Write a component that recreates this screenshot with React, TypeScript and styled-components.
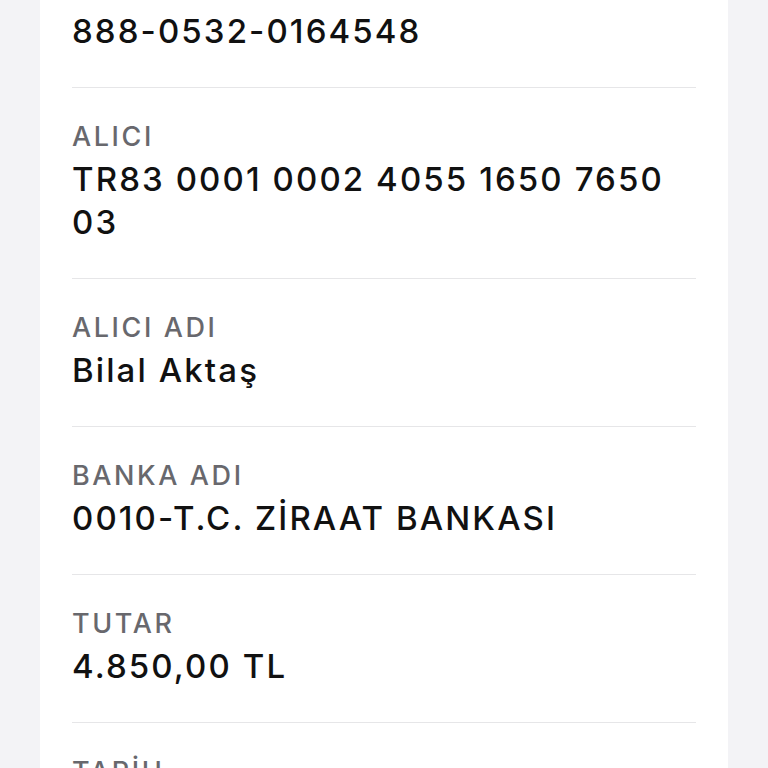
import React from "react";
import styled, { createGlobalStyle } from "styled-components";

const GlobalStyle = createGlobalStyle`
  html, body {
    margin: 0;
    padding: 0;
    background: #f3f3f6;
    overflow: hidden;
  }
  body {
    font-family: Inter, "Noto Sans", "DejaVu Sans", sans-serif;
    -webkit-font-smoothing: antialiased;
  }
`;

const Page = styled.div`
  padding: 0 40px;
  height: 768px;
  overflow: hidden;
`;

const Card = styled.div`
  background: #ffffff;
  padding: 0 32px;
  margin-top: -60px;
`;

const Row = styled.div`
  display: flex;
  flex-direction: column;
  gap: 5px;
  padding: 33px 0 34px;
  & + & {
    border-top: 1px solid #e6e6e8;
  }
`;

const Label = styled.div`
  font-size: 27px;
  line-height: 32px;
  font-weight: 500;
  color: #68686d;
  letter-spacing: 2.6px;
`;

const Value = styled.div`
  font-size: 33px;
  line-height: 43px;
  font-weight: 500;
  color: #111111;
  letter-spacing: 2.1px;
`;

const rows: { label: string; value: string }[] = [
  { label: "CEP TELEFONU", value: "888-0532-0164548" },
  { label: "ALICI", value: "TR83 0001 0002 4055 1650 7650 03" },
  { label: "ALICI ADI", value: "Bilal Aktaş" },
  { label: "BANKA ADI", value: "0010-T.C. ZİRAAT BANKASI" },
  { label: "TUTAR", value: "4.850,00 TL" },
  { label: "TARİH", value: "12.03.2024" },
];

export default function App() {
  return (
    <>
      <GlobalStyle />
      <Page>
        <Card>
          {rows.map((r) => (
            <Row key={r.label}>
              <Label>{r.label}</Label>
              <Value>{r.value}</Value>
            </Row>
          ))}
        </Card>
      </Page>
    </>
  );
}
